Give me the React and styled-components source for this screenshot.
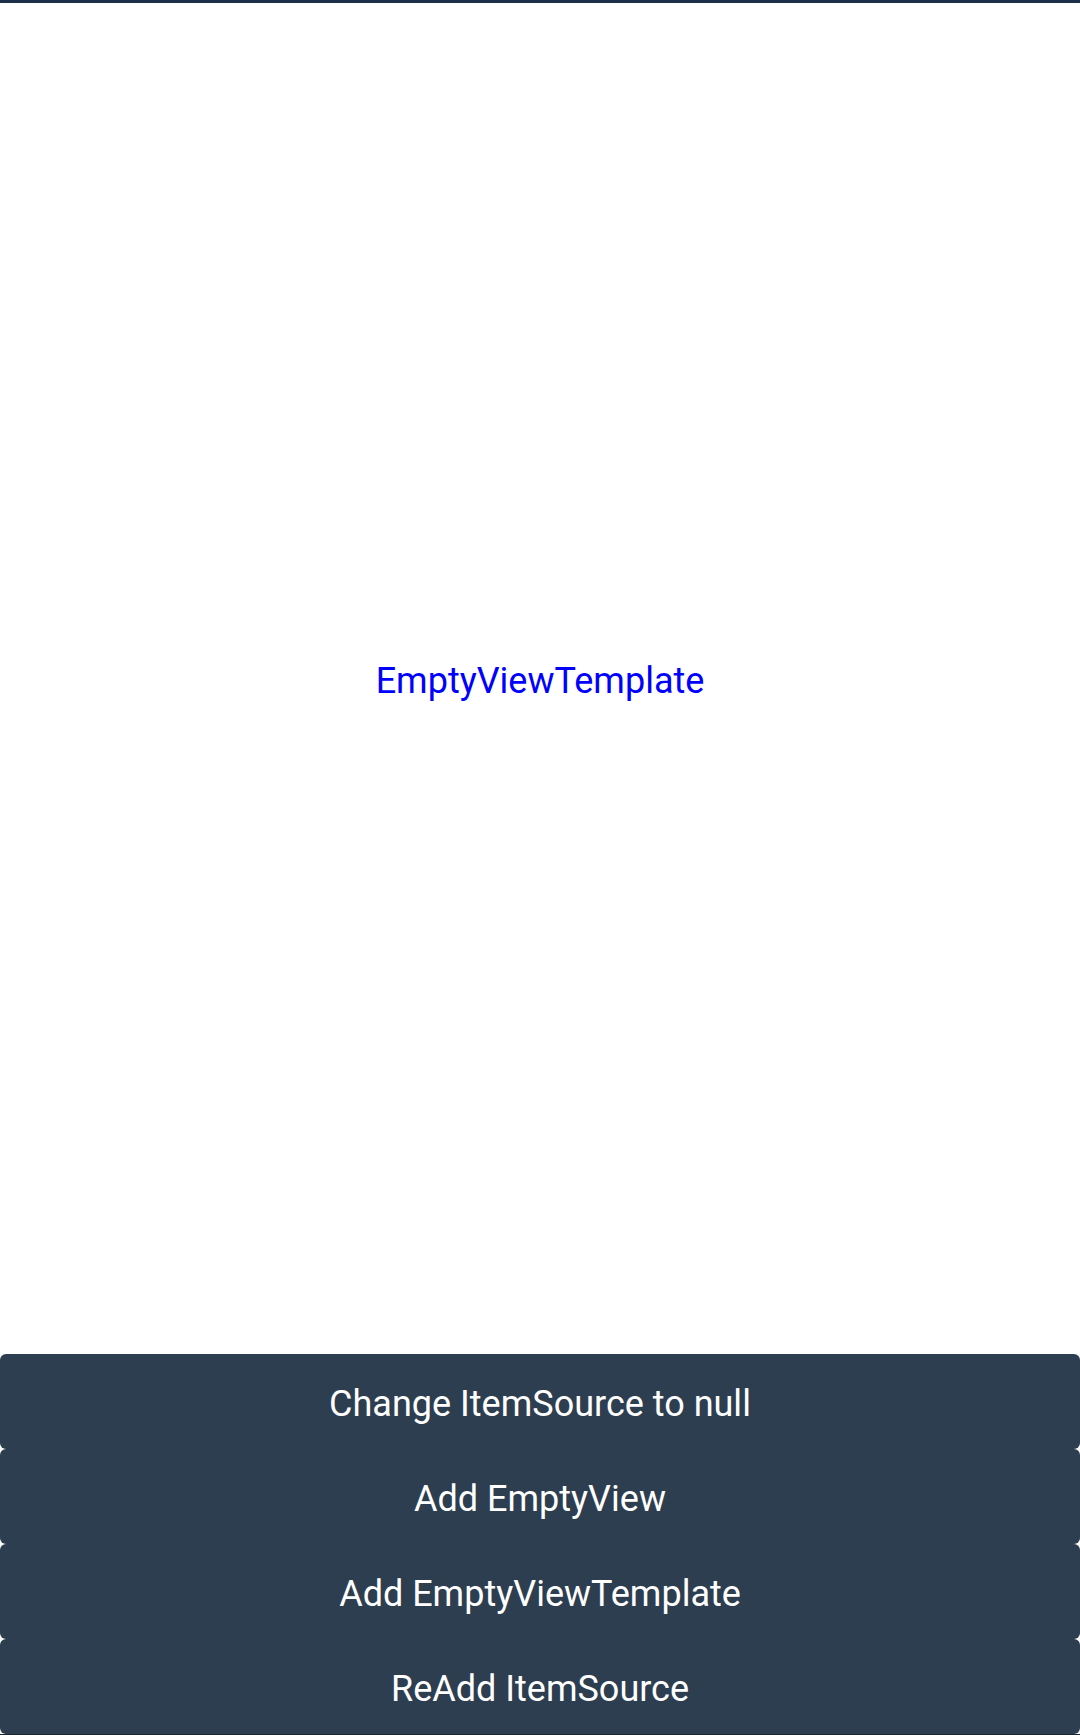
import React from 'react';
import styled, { createGlobalStyle } from 'styled-components';

const GlobalStyle = createGlobalStyle`
  html, body {
    margin: 0;
    padding: 0;
    background: #ffffff;
    font-family: Roboto, "Noto Sans", sans-serif;
  }
  #root {
    height: 100vh;
  }
`;

const Screen = styled.div`
  height: 100vh;
  display: flex;
  flex-direction: column;
  border-top: 3px solid #1b3048;
  border-bottom: 1px solid #1a2530;
  box-sizing: border-box;
  background: #ffffff;
`;

const EmptyArea = styled.div`
  flex: 1;
  display: flex;
  align-items: center;
  justify-content: center;
  padding-top: 4px;
`;

const TemplateLabel = styled.span`
  color: #0000ff;
  font-size: 36px;
  line-height: 1;
`;

const Buttons = styled.div`
  display: flex;
  flex-direction: column;
`;

const ActionButton = styled.button`
  height: 95px;
  width: 100%;
  margin: 0;
  padding: 4px 0 0;
  border: none;
  border-radius: 6px;
  background-color: #2d3e50;
  color: #ffffff;
  font-family: Roboto, "Noto Sans", sans-serif;
  font-size: 36px;
  cursor: pointer;
`;

const actions = [
  'Change ItemSource to null',
  'Add EmptyView',
  'Add EmptyViewTemplate',
  'ReAdd ItemSource',
];

const App = () => {
  return (
    <>
      <GlobalStyle />
      <Screen>
        <EmptyArea>
          <TemplateLabel>EmptyViewTemplate</TemplateLabel>
        </EmptyArea>
        <Buttons>
          {actions.map((label) => (
            <ActionButton key={label}>{label}</ActionButton>
          ))}
        </Buttons>
      </Screen>
    </>
  );
};

export default App;
